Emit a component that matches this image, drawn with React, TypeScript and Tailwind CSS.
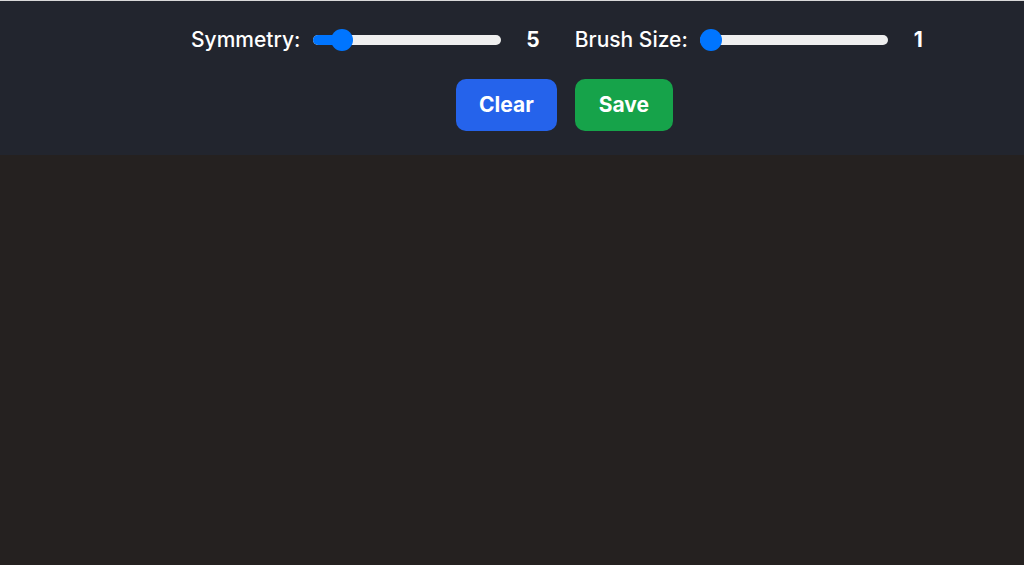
import React from "react";

function Slider({ value, min, max }: { value: number; min: number; max: number }) {
  const frac = (value - min) / (max - min);
  const thumb = 22;
  const width = 188;
  const center = thumb / 2 + frac * (width - thumb);
  return (
    <div className="relative w-[188px] h-[22px] flex items-center">
      <div className="w-full h-[10px] rounded-full bg-[#efefef] overflow-hidden">
        <div className="h-full bg-[#0075ff]" style={{ width: center }} />
      </div>
      <div
        className="absolute top-0 w-[22px] h-[22px] rounded-full bg-[#0075ff]"
        style={{ left: center - thumb / 2 }}
      />
    </div>
  );
}

export default function App() {
  return (
    <div
      className="w-[1024px] h-[565px] flex flex-col bg-[#252120] overflow-hidden"
      style={{ fontFamily: "Inter, 'Noto Sans', sans-serif" }}
    >
      <div className="h-[155px] shrink-0 bg-[#22252e] border-t border-[#d9d9d9] flex flex-col pt-[25px]">
        <div className="flex items-center pl-[191px] h-[28px]">
          <span className="text-[21px] leading-7 font-medium text-white">Symmetry:</span>
          <div className="ml-[13px]">
            <Slider value={5} min={1} max={38} />
          </div>
          <span className="ml-[25px] text-[21px] leading-7 font-bold text-white">5</span>
          <span className="ml-[35px] text-[21px] leading-7 font-medium text-white">Brush Size:</span>
          <div className="ml-[12px]">
            <Slider value={1} min={1} max={20} />
          </div>
          <span className="ml-[26px] text-[21px] leading-7 font-bold text-white">1</span>
        </div>
        <div className="flex items-center gap-[18px] mt-[25px] pl-[456px]">
          <button className="bg-[#2563eb] text-white text-[21px] leading-7 font-bold px-[23px] py-3 rounded-[10px]">Clear</button>
          <button className="bg-[#16a34a] text-white text-[21px] leading-7 font-bold px-[24px] py-3 rounded-[10px]">Save</button>
        </div>
      </div>
      <div className="flex-1" />
    </div>
  );
}
